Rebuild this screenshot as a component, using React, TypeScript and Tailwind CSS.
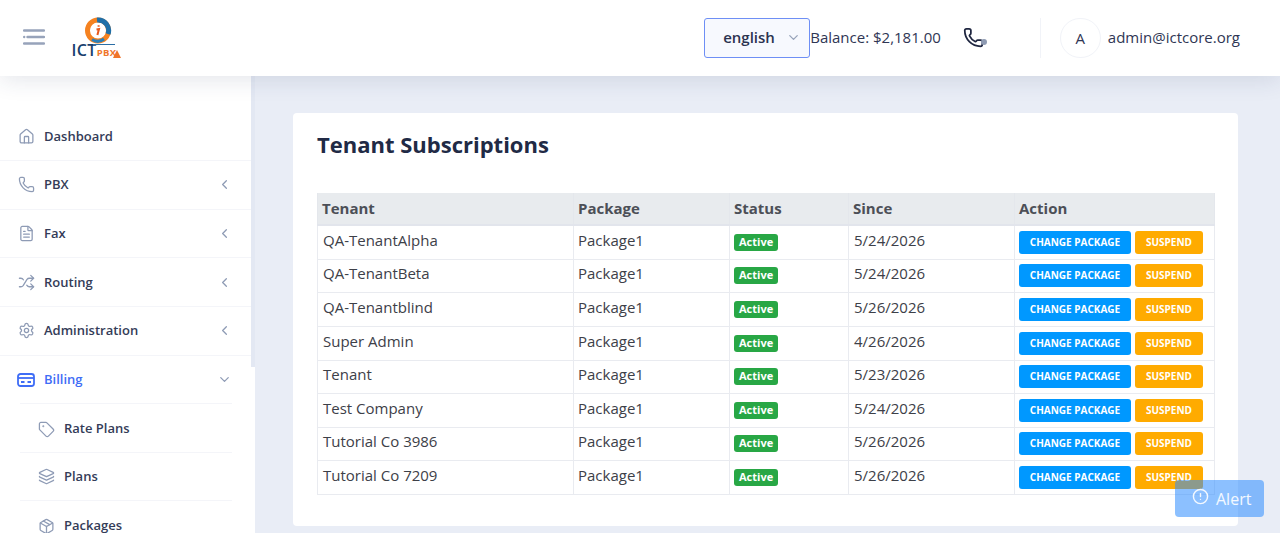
import React from "react";
import { ChevronDown, ChevronLeft, FileText, House, Layers, Package, Phone, Settings, Shuffle, Tag, CircleAlert } from "lucide-react";

const tenants = [
  { name: "QA-TenantAlpha", since: "5/24/2026", h: "h-[34px]" },
  { name: "QA-TenantBeta", since: "5/24/2026", h: "h-[33px]" },
  { name: "QA-Tenantblind", since: "5/26/2026", h: "h-[34px]" },
  { name: "Super Admin", since: "4/26/2026", h: "h-[34px]" },
  { name: "Tenant", since: "5/23/2026", h: "h-[33px]" },
  { name: "Test Company", since: "5/24/2026", h: "h-[34px]" },
  { name: "Tutorial Co 3986", since: "5/26/2026", h: "h-[33px]" },
  { name: "Tutorial Co 7209", since: "5/26/2026", h: "h-[34px]" },
];

const menu = [
  { label: "Dashboard", Icon: House, arrow: false, h: "h-[48px]" },
  { label: "PBX", Icon: Phone, arrow: true, h: "h-[48.7px]" },
  { label: "Fax", Icon: FileText, arrow: true, h: "h-[48.7px]" },
  { label: "Routing", Icon: Shuffle, arrow: true, h: "h-[48.7px] pt-[1px]" },
  { label: "Administration", Icon: Settings, arrow: true, h: "h-[48.7px]" },
];

const submenu = [
  { label: "Rate Plans", Icon: Tag, pad: "pt-[2px]" },
  { label: "Plans", Icon: Layers, pad: "pt-[0px]" },
  { label: "Packages", Icon: Package, pad: "pt-[2px]" },
];

function Logo() {
  return (
    <div className="w-[52px] ml-[26px] flex flex-col items-center">
      <svg width="28" height="27" viewBox="0 0 28 27" className="ml-[2px]">
        <circle cx="14" cy="13.5" r="10.5" fill="none" stroke="#f58220" strokeWidth="5" />
        <path d="M13 3a10.5 10.5 0 0 1 11 14" fill="none" stroke="#1f6fa8" strokeWidth="5" />
        <path d="M20 22a10.5 10.5 0 0 1-12 .5" fill="none" stroke="#2b7fb8" strokeWidth="3" />
        <circle cx="14" cy="13.5" r="7.5" fill="#fff" />
        <path d="M12.5 12.5l2.5-.5-1.6 6M14.6 8.3v1.4" fill="none" stroke="#e8591c" strokeWidth="2" />
      </svg>
      <div className="relative flex items-end h-[14px] w-[51px] leading-none">
        <span className="text-[16px] font-semibold text-[#17406d] tracking-[0.4px]">ICT</span>
        <span className="text-[9.5px] font-bold text-[#f0762b] tracking-[0.3px]">PBX</span>
        <span className="w-0 h-0 border-l-[4px] border-r-[4px] border-b-[8px] border-l-transparent border-r-transparent border-b-[#f0762b] -ml-[3px]" />
        <span className="absolute left-[21px] top-[0px] w-[22px] h-px bg-[#2b6ea5]" />
      </div>
    </div>
  );
}

function Header() {
  return (
    <header className="relative z-10 h-[76px] shrink-0 bg-white flex items-center pb-[2px] shadow-[0_4px_22px_rgba(30,50,90,0.12)]">
      <svg width="22" height="16" viewBox="0 0 22 16" className="ml-[23px]">
        <path d="M1 1.5h20M4.5 8h16.5M1 14.5h20" stroke="#97a3ba" strokeWidth="2.4" strokeLinecap="round" fill="none" />
        <circle cx="1.2" cy="8" r="1.2" fill="#97a3ba" />
      </svg>
      <Logo />
      <div className="flex-1" />
      <div className="w-[106px] h-[40px] mt-[2px] rounded-[3px] border border-[#6e8ff5] bg-[#f7f9fe] flex items-center pl-[18px] pb-[2px] text-[15px] font-semibold text-[#2b3350]">
        english
        <ChevronDown className="ml-[11px] text-[#97a3ba]" size={15} strokeWidth={2} />
      </div>
      <span className="text-[15px] text-[#2f3654]">Balance: $2,181.00</span>
      <div className="relative ml-[22px] w-[26px] h-[26px] flex items-center">
        <Phone size={21} strokeWidth={2} className="text-[#1f2640]" />
        <span className="absolute right-[2px] bottom-[5px] w-[6px] h-[6px] rounded-full bg-[#8e9ab2]" />
      </div>
      <div className="ml-[51px] w-px h-[40px] mt-[2px] bg-[#f1f3f8]" />
      <div className="ml-[19px] mt-[2px] w-[41px] h-[40px] rounded-full border border-[#f1f3f8] flex items-center justify-center text-[15px] text-[#2f3654]">
        A
      </div>
      <span className="ml-[7px] mr-[40px] text-[15px] text-[#2f3654]">admin@ictcore.org</span>
    </header>
  );
}

function Sidebar() {
  return (
    <aside className="relative w-[255px] shrink-0 bg-white pt-[37px] pr-[4px] text-[13px] font-semibold text-[#343c58]">
      {menu.map(({ label, Icon, arrow, h }) => (
        <div key={label} className={`${h} flex items-center pl-[18px] pr-[19px] border-b border-[#f4f5f9]`}>
          <Icon size={17} strokeWidth={1.8} className="text-[#8e9bb5] shrink-0" />
          <span className="ml-[9px] flex-1">{label}</span>
          {arrow && <ChevronLeft size={15} strokeWidth={2} className="text-[#8e9bb5]" />}
        </div>
      ))}
      <div className="h-[47.5px] flex items-center pl-[17px] pr-[19px] text-[#3f6df6]">
        <svg width="18" height="14" viewBox="0 0 18 14" className="shrink-0" fill="none" stroke="currentColor" strokeWidth="1.8">
          <rect x="1" y="1" width="16" height="12" rx="2.5" />
          <path d="M1 5h16" />
          <path d="M4 9h3.5M10.5 9H14" />
        </svg>
        <span className="ml-[9px] flex-1">Billing</span>
        <ChevronDown size={15} strokeWidth={2} className="text-[#8e9bb5]" />
      </div>
      <div className="pl-[20px] pr-[19px]">
        {submenu.map(({ label, Icon, pad }) => (
          <div key={label} className={`h-[48.5px] flex items-center pl-[18px] ${pad} border-t border-[#f4f5f9]`}>
            <Icon size={17} strokeWidth={1.8} className="text-[#8e9bb5] shrink-0" />
            <span className="ml-[9px]">{label}</span>
          </div>
        ))}
      </div>
      {/* scrollbar thumb */}
      <div className="absolute right-0 top-0 w-[4px] h-[291px] bg-[#e3e8f3]" />
    </aside>
  );
}

function Row({ name, since, h }: { name: string; since: string; h: string }) {
  return (
    <tr className={`${h} border-b border-[#e9ebf0]`}>
      <td className="border-x border-[#e9ebf0] pl-[5px] pb-[4px]">{name}</td>
      <td className="border-x border-[#e9ebf0] pl-[4px] pb-[4px]">Package1</td>
      <td className="border-x border-[#e9ebf0] pl-[4px] pb-[3px]">
        <span className="inline-block h-[17px] leading-[16px] px-[5px] rounded-[3px] bg-[#28a745] text-white text-[11px] font-bold align-middle">
          Active
        </span>
      </td>
      <td className="border-x border-[#e9ebf0] pl-[5px] pb-[4px]">{since}</td>
      <td className="border-x border-[#e9ebf0] pl-[4px]">
        <div className="flex gap-[4px]">
          <span className="w-[112px] h-[23px] rounded-[3px] bg-[#0098ff] text-white text-[10px] font-bold flex items-center justify-center">
            CHANGE PACKAGE
          </span>
          <span className="w-[68px] h-[23px] rounded-[3px] bg-[#ffab00] text-white text-[10px] font-bold flex items-center justify-center">
            SUSPEND
          </span>
        </div>
      </td>
    </tr>
  );
}

export default function App() {
  return (
    <div className="relative h-[533px] w-[1280px] overflow-hidden flex flex-col bg-[#e9edf6] font-['Open_Sans',sans-serif]">
      <Header />
      <div className="flex flex-1 min-h-0">
        <Sidebar />
        <main className="flex-1 pl-[38px] pr-[42px] pt-[37px]">
          <div className="h-[413px] rounded-[4px] bg-white pl-[24px] pr-[23px]">
            <h1 className="pt-[15px] h-[80px] text-[22px] leading-[33px] font-bold text-[#212a45]">Tenant Subscriptions</h1>
            <table className="w-[897px] table-fixed border-collapse text-[15px] text-[#3d4048]">
              <colgroup>
                <col className="w-[256px]" />
                <col className="w-[156px]" />
                <col className="w-[119px]" />
                <col className="w-[166px]" />
                <col className="w-[200px]" />
              </colgroup>
              <thead>
                <tr className="h-[32px] bg-[#e8ebee] border-b-2 border-[#e2e5ec] text-[#4c4f57] font-bold text-left">
                  <th className="pl-[4px] border-x border-[#e4e7ec]">Tenant</th>
                  <th className="pl-[4px] border-x border-[#e4e7ec]">Package</th>
                  <th className="pl-[4px] border-x border-[#e4e7ec]">Status</th>
                  <th className="pl-[4px] border-x border-[#e4e7ec]">Since</th>
                  <th className="pl-[4px] border-x border-[#e4e7ec]">Action</th>
                </tr>
              </thead>
              <tbody>
                {tenants.map((t) => (
                  <Row key={t.name} {...t} />
                ))}
              </tbody>
            </table>
          </div>
        </main>
      </div>
      <div className="absolute left-[1175px] top-[480px] w-[89px] h-[37px] rounded-[4px] bg-[#2d8cff]/55 flex items-center pl-[17px] text-white/90 text-[16px]">
        <CircleAlert size={17} strokeWidth={2} className="-mt-[4px]" />
        <span className="ml-[7px]">Alert</span>
      </div>
    </div>
  );
}
